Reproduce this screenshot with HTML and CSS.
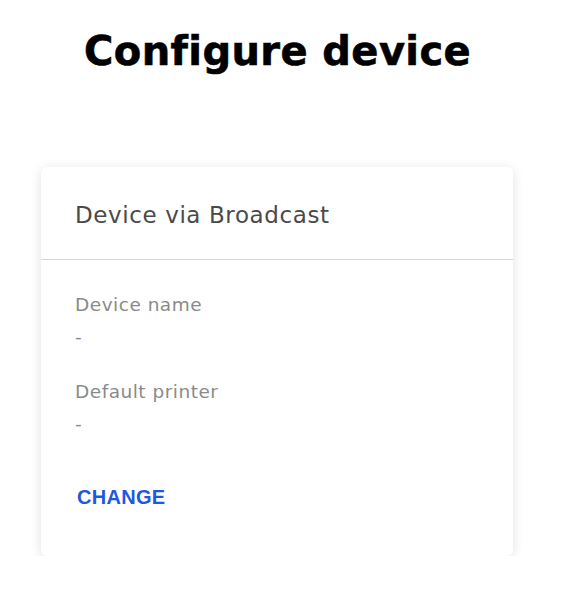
FILE: index.html
```html
<!DOCTYPE html>
<html>
<head>
<meta charset="utf-8">
<link rel="stylesheet" href="styles.css">
</head>
<body>
<h1 class="title">Configure device</h1>
<div class="card">
  <div class="card-header">Device via Broadcast</div>
  <div class="card-body">
    <div class="field">
      <div class="label">Device name</div>
      <div class="value">-</div>
    </div>
    <div class="field">
      <div class="label">Default printer</div>
      <div class="value">-</div>
    </div>
    <button class="change">CHANGE</button>
  </div>
</div>
</body>
</html>
```
FILE: styles.css
```css
html, body {
  margin: 0;
  padding: 0;
  background: #fff;
}
body {
  font-family: "DejaVu Sans", Inter, sans-serif;
}
.title {
  margin: 24px 0 0 0;
  padding-left: 84px;
  font-family: "DejaVu Sans", Inter, sans-serif;
  font-size: 40px;
  font-weight: 700;
  letter-spacing: 0.4px;
  -webkit-text-stroke: 0.6px #000;
  color: #000;
  line-height: 54px;
}
.card {
  margin: 89px 0 0 41px;
  width: 472px;
  height: 389px;
  background: #fff;
  border-radius: 6px;
  box-shadow: 0 2px 12px rgba(0,0,0,0.12);
  box-sizing: border-box;
}
.card-header {
  height: 93px;
  box-sizing: border-box;
  padding: 34px 34px 0 34px;
  font-size: 23px;
  line-height: 28px;
  letter-spacing: 0.6px;
  color: #4a4a4a;
  border-bottom: 1px solid #d6d6d6;
}
.card-body {
  padding: 34px 34px 0 34px;
}
.field {
  margin-bottom: 33px;
}
.label {
  font-size: 18.5px;
  line-height: 22px;
  letter-spacing: 0.5px;
  color: #8a8a8a;
}
.value {
  font-size: 18.5px;
  line-height: 22px;
  color: #8a8a8a;
  margin-top: 10px;
}
.change {
  margin-top: 18px;
  padding: 0 0 0 2px;
  border: none;
  background: none;
  font-family: "Liberation Sans", Arial, sans-serif;
  font-weight: 700;
  font-size: 20px;
  letter-spacing: 0.3px;
  color: #1f58df;
  cursor: pointer;
}
```
